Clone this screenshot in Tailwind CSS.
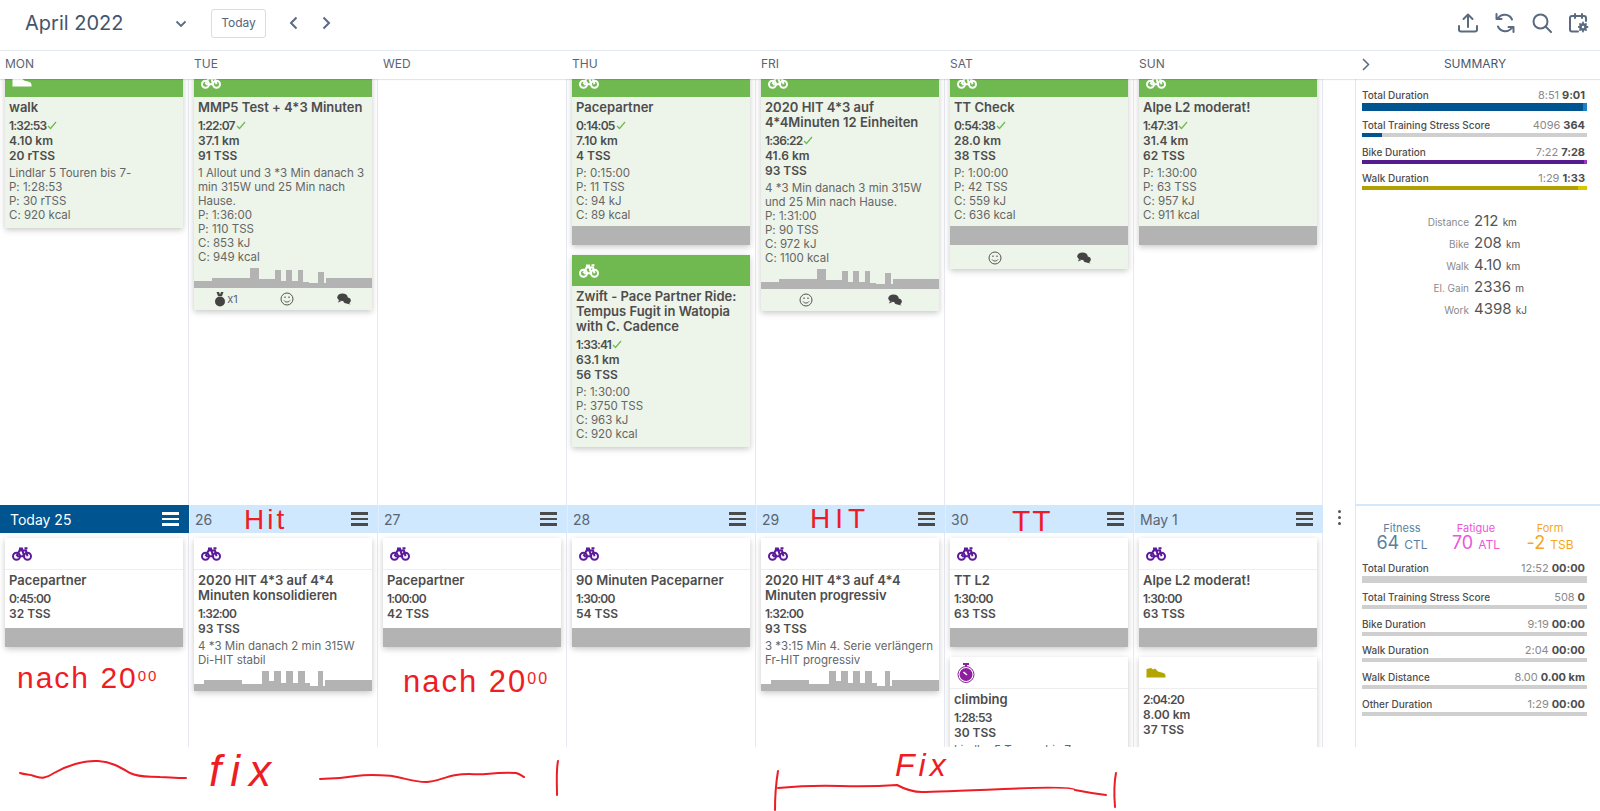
<!DOCTYPE html>
<html lang="en">
<head>
    <meta charset="UTF-8">
    <title>Calendar</title>
    <script src="https://cdn.jsdelivr.net/npm/@tailwindcss/browser@4"></script>
</head>
<body class="bg-white font-['Inter',sans-serif] [font-feature-settings:'calt'_0] text-[#4d4d4d] overflow-hidden">
<div class="relative h-[811px] w-[1600px] overflow-hidden">
    <!-- Top bar -->
    <div class="h-[51px] border-b border-[#e3e9f0] flex items-center pl-[25px] text-[#5a6b80]">
        <div class="text-[20px] w-[150px] text-[#46546a] -mt-[5px]">April 2022</div>
        <svg class="w-[12px] h-[8px] -mt-[3px]" viewBox="0 0 12 8" fill="none" stroke="currentColor" stroke-width="1.8"><path d="M1.500 1.500 6 6l4.500-4.500"/></svg>
        <button class="ml-[24px] w-[55px] h-[29px] border border-[#d5dde6] rounded-[3px] text-[12px] text-[#55657a] -mt-[4px]">Today</button>
        <svg class="ml-[23px] w-[9px] h-[14px] -mt-[5px]" viewBox="0 0 9 14" fill="none" stroke="currentColor" stroke-width="2"><path d="M7.500 1.500 2 7l5.500 5.500"/></svg>
        <svg class="ml-[24px] w-[9px] h-[14px] -mt-[5px]" viewBox="0 0 9 14" fill="none" stroke="currentColor" stroke-width="2"><path d="M1.500 1.500 7 7l-5.500 5.500"/></svg>
        <div class="ml-auto flex gap-[17px] pr-[11px] -mt-[5px]">
            <svg class="w-[20px] h-[20px]" viewBox="0 0 20 20" fill="none" stroke="currentColor" stroke-width="2" stroke-linecap="round" stroke-linejoin="round"><path d="M10 14V1.500M5.500 6 10 1.500 14.500 6M1 13v3.500a2 2 0 0 0 2 2h14a2 2 0 0 0 2-2V13"/></svg>
            <svg class="w-[20px] h-[20px]" viewBox="0 0 20 20" fill="none" stroke="currentColor" stroke-width="2" stroke-linecap="round" stroke-linejoin="round"><path d="M17 6.500A8 8 0 0 0 3 5.500M1.500 1v5h5M3 13.500a8 8 0 0 0 14 1M18.500 19v-5h-5"/></svg>
            <svg class="w-[20px] h-[20px]" viewBox="0 0 20 20" fill="none" stroke="currentColor" stroke-width="2" stroke-linecap="round"><circle cx="8.500" cy="8.500" r="7"/><path d="m13.500 13.500 5.500 5.500"/></svg>
            <svg class="w-[20px] h-[20px]" viewBox="0 0 20 20" fill="none" stroke="currentColor" stroke-width="2" stroke-linecap="round" stroke-linejoin="round"><path d="M9 18.500H3a2 2 0 0 1-2-2V5a2 2 0 0 1 2-2h12a2 2 0 0 1 2 2v3M6 1v4M13 1v4"/><circle cx="14" cy="14" r="2.500" stroke-width="2.500"/><path d="M14 9.500v1.200M14 17.300v1.200M9.800 14H11M17 14h1.500M11 11l.8.800M16.200 16.200l.8.800M11 17l.8-.8M16.200 11.800l.8-.8" stroke-width="1.800"/></svg>
        </div>
    </div>

    <!-- Day names -->
    <div class="h-[28px] flex items-center text-[12px] text-[#5a6472] relative z-10 bg-white shadow-[0_1px_1px_rgba(0,0,0,0.1)]">
        <div id="dayNames" class="w-[1323px] grid grid-cols-[repeat(7,189px)] -mt-[2px]"></div>
        <div class="w-[32px]"></div>
        <div class="relative flex-1 text-center pr-[5px] text-[#4a5668] -mt-[2px]">
            <svg class="absolute left-[7px] top-[3px] w-[8px] h-[13px]" viewBox="0 0 8 13" fill="none" stroke="#5a6b80" stroke-width="1.500"><path d="m1 1 5.500 5.500L1 12"/></svg>
            SUMMARY
        </div>
    </div>

    <div class="flex h-[668px]">
        <div class="w-[1323px] flex flex-col">
            <div id="week1" class="h-[426px] grid grid-cols-[repeat(7,189px)] overflow-hidden"></div>
            <div id="bandRow" class="h-[28px] grid grid-cols-[repeat(7,189px)] bg-[#cfe8fe]"></div>
            <div id="week2" class="h-[214px] grid grid-cols-[repeat(7,189px)] overflow-hidden"></div>
        </div>
        <div class="w-[32px] flex flex-col items-center pt-[431px]">
            <div class="flex flex-col gap-[3px]">
                <span class="w-[3px] h-[3px] rounded-full bg-[#555]"></span>
                <span class="w-[3px] h-[3px] rounded-full bg-[#555]"></span>
                <span class="w-[3px] h-[3px] rounded-full bg-[#555]"></span>
            </div>
        </div>
        <div class="w-[245px] border-l border-[#dfe6ef] flex flex-col">
            <div id="sumTop" class="h-[427px] pl-[6px] pr-[13px] pt-[9px] border-b-2 border-[#d3e8fb]"></div>
            <div id="sumBottom" class="flex-1 pl-[6px] pr-[13px] pt-[15px]"></div>
        </div>
    </div>

    <!-- Handwritten notes on the screenshot -->
    <div class="absolute inset-0 pointer-events-none text-[#ee1c25] font-['Liberation_Sans',sans-serif] z-20">
        <span class="absolute left-[244px] top-[504px] text-[28px] font-light tracking-[3px] leading-[32px]">Hit</span>
        <span class="absolute left-[810px] top-[503px] text-[28px] font-light tracking-[5px] leading-[32px]">HIT</span>
        <span class="absolute left-[1012px] top-[505px] text-[30px] font-light tracking-[2px] leading-[32px]">TT</span>
        <span class="absolute left-[17px] top-[660px] text-[30px] tracking-[2px] leading-[36px]">nach 20<sup class="text-[15px] tracking-[2px]">00</sup></span>
        <span class="absolute left-[403px] top-[663px] text-[31px] tracking-[2px] leading-[38px]">nach 20<sup class="text-[16px] tracking-[2px]">00</sup></span>
        <span class="absolute left-[209px] top-[746px] text-[44px] italic tracking-[9px] leading-[50px]">fix</span>
        <span class="absolute left-[895px] top-[746px] text-[32px] italic tracking-[4px] leading-[38px]">Fix</span>
        <svg class="absolute inset-0" width="1600" height="811" fill="none" stroke="#ee1c25" stroke-width="2" stroke-linecap="round">
            <path d="M20 773c6 2 10 1 14 3 8 3 12 2 20-3 12-7 30-13 44-12 14 1 22 6 32 12 10 5 20 3 30 4 8 0 14 1 26 1"/>
            <path d="M320 779c12 0 24-1 36-3 14-2 24-1 36 0 12 2 22 6 34 6 10 0 18-5 30-7 12-2 20 0 30-1 10-1 20-2 30-1 4 1 6 3 8 4"/>
            <path d="M558 761c-2 10-1 22-1 34"/>
            <path d="M778 771c-2 12-3 26-3 39"/>
            <path d="M778 788Q810 785 840 786T897 785Q910 792 922 792T1004 789T1075 790Q1090 793 1106 795"/>
            <path d="M1116 773c-2 10-2 22-1 34"/>
        </svg>
    </div>
</div>

<script>
    const bike = (cls) => `<svg class="${cls} w-[20px] h-[14px]" viewBox="0 0 20 14" fill="none" stroke="currentColor" stroke-width="2"><circle cx="4.500" cy="9.300" r="3.500"/><circle cx="15.500" cy="9.300" r="3.500"/><path d="M4.500 9.300 7.500 3.500h6.500l1.500 5.800M7 1.500h3L12 9.300H5M12.500 1.200h3"/></svg>`;
    const shoe = (cls) => `<svg class="${cls} w-[20px] h-[10px]" viewBox="0 0 20 10" fill="currentColor"><path d="M.5 1 5 0l2 1.500 2-1 3 3 5.500 1.500c1 .4 2 1.500 2 3v1.500H.5z"/></svg>`;
    const watch = (cls) => `<svg class="${cls} w-[18px] h-[20px]" viewBox="0 0 18 20"><rect x="6" y="0" width="6" height="2" fill="currentColor"/><rect x="8" y="1" width="2" height="3" fill="currentColor"/><circle cx="9" cy="11.500" r="8" fill="#fff" stroke="currentColor" stroke-width="1"/><circle cx="9" cy="11.500" r="6.500" fill="currentColor"/><path d="M6.500 9 10 12" stroke="#fff" stroke-width="1.500"/></svg>`;
    const check = `<svg class="inline-block w-[10px] h-[9px] ml-[1px] align-[0px]" viewBox="0 0 10 9" fill="none" stroke="#70b950" stroke-width="1.200"><path d="M1 5l2.500 2.500L9 1"/></svg>`;
    const smile = `<svg class="w-[14px] h-[14px]" viewBox="0 0 14 14" fill="none" stroke="#555" stroke-width="1"><circle cx="7" cy="7" r="6"/><path d="M4 8.500c1.500 2 4.500 2 6 0"/><path d="M5 4.500v1.500M9 4.500v1.500" stroke-width="1.200"/></svg>`;
    const chat = `<svg class="w-[14px] h-[12px]" viewBox="0 0 14 12" fill="#444"><ellipse cx="5.500" cy="4.200" rx="5.200" ry="3.800"/><path d="M2 7 1 9.500 4.500 8z"/><ellipse cx="10" cy="7.500" rx="3.800" ry="3"/><path d="M11.500 9.500 13.500 11.500 9.500 10.500z"/></svg>`;
    const medal = `<span class="flex items-center gap-[2px] text-[11px] text-[#5a6472]"><svg class="w-[10px] h-[15px]" viewBox="0 0 10 15" fill="#444"><path d="M1.500 0h2.500L5 2.500 6 0h2.500L7 4H3z"/><circle cx="5" cy="9.500" r="5"/></svg>x1</span>`;

    // heights of the workout profile, [width, height] per step
    const hard = [[18,7],[38,10],[9,20],[16,9],[6,18],[5,7],[6,18],[6,7],[5,18],[6,6],[9,5],[6,16],[2,5],[46,10]];
    const hit = [[10,7],[38,11],[20,7],[7,20],[5,10],[7,20],[5,8],[7,20],[5,8],[7,20],[5,8],[8,5],[5,20],[2,5],[47,11]];
    function chart(steps) {
        let x = 0, d = 'M0 20';
        steps.forEach(([w, h]) => { d += `V${20 - h}H${x + w}`; x += w; });
        return `<svg class="block w-[178px] h-[20px]" viewBox="0 0 178 20" preserveAspectRatio="none"><path d="${d}V20Z" fill="#b3b3b3"/></svg>`;
    }

    function card(c) {
        const head = c.done
            ? `<div class="h-[31px] bg-[#70b950] flex items-center pl-[7px] text-white">${c.icon('')}</div>`
            : `<div class="h-[32px] bg-white border-b border-[#eee] flex items-center pl-[7px] ${c.color}">${c.icon('')}</div>`;
        const title = c.title ? `<div class="text-[13px] font-semibold leading-[15px] mb-[3px]">${c.title}</div>` : '';
        const stats = c.stats.map((s, i) => i === 0
            ? `<div><span class="tracking-[-0.8px]">${s}</span>${c.done ? check : ''}</div>`
            : `<div>${s}</div>`).join('');
        const notes = c.notes ? `<div class="text-[11.5px] leading-[14px] text-[#666] mt-[3px] pb-[4px]">${c.notes.join('<br>')}</div>` : '';
        const foot = c.foot ? `<div class="h-[22px] flex justify-around items-center">${c.foot.join('')}</div>` : '';
        return `<div class="mx-[5px] mb-[10px] w-[178px] shadow-[0_2px_6px_rgba(0,0,0,0.22)] ${c.done ? 'bg-[#edf4e9]' : 'bg-white'}">
            ${head}
            <div class="px-[4px] pt-[3px] ${c.pb || ''}">
                ${title}
                <div class="text-[12px] font-semibold leading-[15px]">${stats}</div>
                ${notes}
            </div>
            ${c.gray ? '<div class="h-[19px] mb-[2px] bg-[#b3b3b3]"></div>' : ''}
            ${c.chart ? chart(c.chart) : ''}
            ${foot}
        </div>`;
    }

    const week1 = [
        [{ done: 1, icon: shoe, title: 'walk', stats: ['1:32:53', '4.10 km', '20 rTSS'], notes: ['Lindlar 5 Touren bis 7-', 'P: 1:28:53', 'P: 30 rTSS', 'C: 920 kcal'], pb: 'pb-[2px]' }],
        [{ done: 1, icon: bike, title: 'MMP5 Test + 4*3 Minuten', stats: ['1:22:07', '37.1 km', '91 TSS'], notes: ['1 Allout und 3 *3 Min danach 3', 'min 315W und 25 Min nach', 'Hause.', 'P: 1:36:00', 'P: 110 TSS', 'C: 853 kJ', 'C: 949 kcal'], chart: hard, foot: [medal, smile, chat] }],
        [],
        [{ done: 1, icon: bike, title: 'Pacepartner', stats: ['0:14:05', '7.10 km', '4 TSS'], notes: ['P: 0:15:00', 'P: 11 TSS', 'C: 94 kJ', 'C: 89 kcal'], gray: 1 },
         { done: 1, icon: bike, title: 'Zwift - Pace Partner Ride: Tempus Fugit in Watopia with C. Cadence', stats: ['1:33:41', '63.1 km', '56 TSS'], notes: ['P: 1:30:00', 'P: 3750 TSS', 'C: 963 kJ', 'C: 920 kcal'], pb: 'pb-[2px]' }],
        [{ done: 1, icon: bike, title: '2020 HIT 4*3 auf 4*4Minuten 12 Einheiten', stats: ['1:36:22', '41.6 km', '93 TSS'], notes: ['4 *3 Min danach 3 min 315W', 'und 25 Min nach Hause.', 'P: 1:31:00', 'P: 90 TSS', 'C: 972 kJ', 'C: 1100 kcal'], chart: hard, foot: [smile, chat] }],
        [{ done: 1, icon: bike, title: 'TT Check', stats: ['0:54:38', '28.0 km', '38 TSS'], notes: ['P: 1:00:00', 'P: 42 TSS', 'C: 559 kJ', 'C: 636 kcal'], gray: 1, foot: [smile, chat] }],
        [{ done: 1, icon: bike, title: 'Alpe L2 moderat!', stats: ['1:47:31', '31.4 km', '62 TSS'], notes: ['P: 1:30:00', 'P: 63 TSS', 'C: 957 kJ', 'C: 911 kcal'], gray: 1 }],
    ];
    const purple = 'text-[#5b1a99]';
    const week2 = [
        [{ icon: bike, color: purple, title: 'Pacepartner', stats: ['0:45:00', '32 TSS'], gray: 1, pb: 'pb-[7px]' }],
        [{ icon: bike, color: purple, title: '2020 HIT 4*3 auf 4*4 Minuten konsolidieren', stats: ['1:32:00', '93 TSS'], notes: ['4 *3 Min danach 2 min 315W', 'Di-HIT stabil'], chart: hit }],
        [{ icon: bike, color: purple, title: 'Pacepartner', stats: ['1:00:00', '42 TSS'], gray: 1, pb: 'pb-[7px]' }],
        [{ icon: bike, color: purple, title: '90 Minuten Paceparner', stats: ['1:30:00', '54 TSS'], gray: 1, pb: 'pb-[7px]' }],
        [{ icon: bike, color: purple, title: '2020 HIT 4*3 auf 4*4 Minuten progressiv', stats: ['1:32:00', '93 TSS'], notes: ['3 *3:15 Min 4. Serie verlängern', 'Fr-HIT progressiv'], chart: hit }],
        [{ icon: bike, color: purple, title: 'TT L2', stats: ['1:30:00', '63 TSS'], gray: 1, pb: 'pb-[7px]' },
         { icon: watch, color: 'text-[#8e1f9e]', title: 'climbing', stats: ['1:28:53', '30 TSS'], notes: ['Lindlar 5 Touren bis 7-'] }],
        [{ icon: bike, color: purple, title: 'Alpe L2 moderat!', stats: ['1:30:00', '63 TSS'], gray: 1, pb: 'pb-[7px]' },
         { icon: shoe, color: 'text-[#b3a400]', stats: ['2:04:20', '8.00 km', '37 TSS'], gray: 1, pb: 'pb-[15px]' }],
    ];

    const column = (cards, cls) => `<div class="border-r border-[#e6e9f2] ${cls}">${cards.map(card).join('')}</div>`;
    document.getElementById('dayNames').innerHTML = ['MON', 'TUE', 'WED', 'THU', 'FRI', 'SAT', 'SUN'].map(d => `<div class="pl-[5px]">${d}</div>`).join('');
    document.getElementById('week1').innerHTML = week1.map(c => column(c, '-mt-[13px]')).join('');
    document.getElementById('week2').innerHTML = week2.map(c => column(c, 'pt-[5px]')).join('');

    const menu = (c) => `<span class="flex flex-col gap-[3px] w-[17px] mr-[10px]"><i class="block h-[2.5px] ${c}"></i><i class="block h-[2.5px] ${c}"></i><i class="block h-[2.5px] ${c}"></i></span>`;
    document.getElementById('bandRow').innerHTML = ['Today 25', '26', '27', '28', '29', '30', 'May 1'].map((d, i) => i === 0
        ? `<div class="bg-[#00548f] text-white text-[14px] flex items-center justify-between pl-[10px]">${d}${menu('bg-white')}</div>`
        : `<div class="text-[#5a6472] text-[14px] flex items-center justify-between pl-[5px] border-l border-[#e0eefb]">${d}${menu('bg-[#4a4a4a]')}</div>`).join('');

    function metric(m) {
        const fills = (m.fills || []).map(([w, c]) => `<div class="h-full ${c}" style="width:${w}px"></div>`).join('');
        return `<div class="${m.mb}">
            <div class="flex justify-between items-baseline text-[10px] leading-[14px] font-medium pr-[2px]">
                <span>${m.name}</span>
                <span class="text-[11px]"><span class="font-normal text-[#8a8a8a]">${m.a}</span> <b class="font-bold">${m.b}</b></span>
            </div>
            <div class="flex mt-[1px] bg-[#cfcfcf] ${m.h}">${fills}</div>
        </div>`;
    }
    const stat = (l, v, u) => `<div class="grid grid-cols-[107px_1fr] gap-[5px] items-baseline h-[22px]"><span class="text-right text-[10px] text-[#8a8a8a]">${l}</span><span class="text-[15px] text-[#555]">${v} <span class="text-[10px]">${u}</span></span></div>`;

    document.getElementById('sumTop').innerHTML = [
        { name: 'Total Duration', a: '8:51', b: '9:01', h: 'h-[8px]', mb: 'mb-[7px]', fills: [[222, 'bg-[#00548f]'], [4, 'bg-[#1f80c8]']] },
        { name: 'Total Training Stress Score', a: '4096', b: '364', h: 'h-[4px]', mb: 'mb-[8px]', fills: [[20, 'bg-[#00548f]']] },
        { name: 'Bike Duration', a: '7:22', b: '7:28', h: 'h-[4px]', mb: 'mb-[7px]', fills: [[223, 'bg-[#561b8d]'], [3, 'bg-[#9a34cc]']] },
        { name: 'Walk Duration', a: '1:29', b: '1:33', h: 'h-[4px]', mb: 'mb-[20px]', fills: [[217, 'bg-[#b0a000]'], [9, 'bg-[#d8c800]']] },
    ].map(metric).join('') + '<div>' + [
        stat('Distance', '212', 'km'), stat('Bike', '208', 'km'), stat('Walk', '4.10', 'km'), stat('El. Gain', '2336', 'm'), stat('Work', '4398', 'kJ'),
    ].join('') + '</div>';

    const gauge = (l, v, u, c) => `<div class="text-center ${c}"><div class="text-[11px] leading-[14px]">${l}</div><div class="text-[18px] leading-[16px]">${v} <span class="text-[12px]">${u}</span></div></div>`;
    document.getElementById('sumBottom').innerHTML = `<div class="grid grid-cols-3 mb-[8px] pl-[3px]">${gauge('Fitness', '64', 'CTL', 'text-[#5d7f9e]')}${gauge('Fatigue', '70', 'ATL', 'text-[#ee55d8]')}${gauge('Form', '-2', 'TSB', 'text-[#f5a623]')}</div>` + [
        { name: 'Total Duration', a: '12:52', b: '00:00', h: 'h-[7px]', mb: 'mb-[7px]' },
        { name: 'Total Training Stress Score', a: '508', b: '0', h: 'h-[4px]', mb: 'mb-[8px]' },
        { name: 'Bike Duration', a: '9:19', b: '00:00', h: 'h-[4px]', mb: 'mb-[7px]' },
        { name: 'Walk Duration', a: '2:04', b: '00:00', h: 'h-[4px]', mb: 'mb-[8px]' },
        { name: 'Walk Distance', a: '8.00', b: '0.00 km', h: 'h-[4px]', mb: 'mb-[8px]' },
        { name: 'Other Duration', a: '1:29', b: '00:00', h: 'h-[4px]', mb: '' },
    ].map(metric).join('');
</script>
</body>
</html>
